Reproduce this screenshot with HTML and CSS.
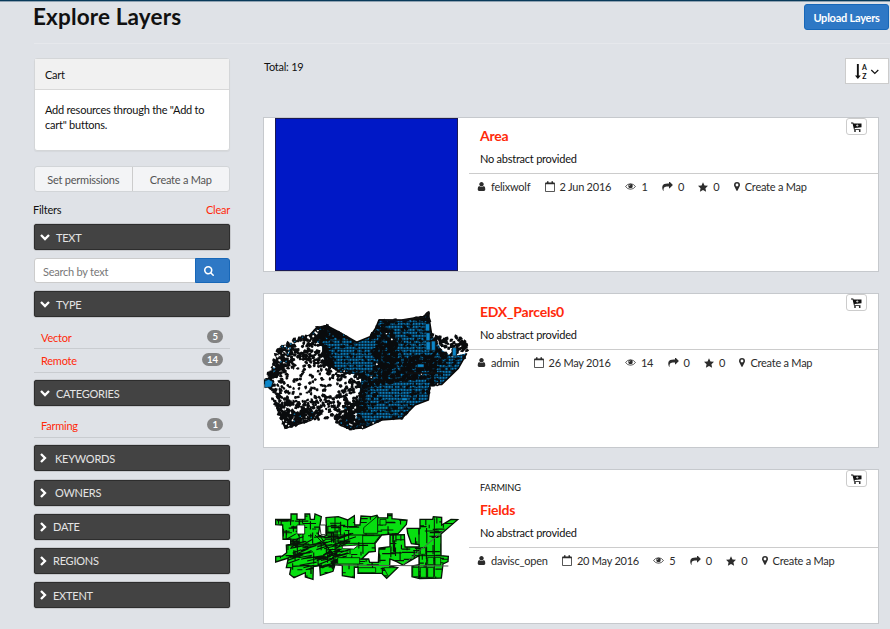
FILE: index.html
```html
<!DOCTYPE html>
<html lang="en">
<head>
<meta charset="utf-8">
<title>Explore Layers</title>
<link rel="stylesheet" href="styles.css">
</head>
<body>
<svg class="defs" width="0" height="0" aria-hidden="true">
  <symbol id="user" viewBox="256 128 1280 1536"><path d="M1536 1399q0 109-62.5 187t-150.5 78h-854q-88 0-150.5-78t-62.5-187q0-85 8.5-160.5t31.5-152 58.5-131 94-89 134.5-34.5q131 128 313 128t313-128q76 0 134.5 34.5t94 89 58.5 131 31.5 152 8.5 160.5zm-256-887q0 159-112.5 271.5t-271.5 112.5-271.5-112.5-112.5-271.5 112.5-271.5 271.5-112.5 271.5 112.5 112.5 271.5z"/></symbol>
  <symbol id="cal" viewBox="0 0 10 11"><path d="M.5 2h9v8.500h-9z" fill="none" stroke="currentColor" stroke-width=".8"/><path d="M.5 1.800h9v1.400h-9zM2 .2h1.500v2.500H2zM6.500 .2H8v2.500H6.500z"/></symbol>
  <symbol id="eye" viewBox="0 0 22 14"><path d="M1 7Q5 1.500 11 1.500T21 7Q17 12.500 11 12.500T1 7z" fill="none" stroke="currentColor" stroke-width="1.500"/><circle cx="11" cy="6.200" r="4.500"/><path d="M8.500 6Q8.700 3.600 11 3.500" fill="none" stroke="#fff" stroke-width="1"/></symbol>
  <symbol id="share" viewBox="0 128 1792 1536"><path d="M1792 640q0 26-19 45l-512 512q-19 19-45 19t-45-19-19-45v-256h-224q-98 0-175.500 6t-154 21.500-133 42.500-105.500 69.500-80 101-48.500 138.500-17.500 181q0 55 5 123 0 6 2.500 23.500t2.500 26.500q0 15-8.500 25t-23.500 10q-16 0-28-17-7-9-13-22t-13.500-30-10.500-24q-127-285-127-451 0-199 53-333 162-403 875-403h224v-256q0-26 19-45t45-19 45 19l512 512q19 19 19 45z"/></symbol>
  <symbol id="star" viewBox="0 0 20 19"><path d="M10 0l3 6.300 7 .9-5.100 4.800 1.300 6.900L10 15.600l-6.200 3.300L5.100 12 0 7.200l7-.9z"/></symbol>
  <symbol id="pin" viewBox="0 0 12 18"><path fill-rule="evenodd" d="M6 0a6 6 0 0 1 6 6c0 1.200-.3 2-.6 2.700L7.200 17.200a1.300 1.300 0 0 1-2.400 0L.6 8.700C.3 8 0 7.200 0 6a6 6 0 0 1 6-6zm0 3.200a2.800 2.800 0 1 0 0 5.600 2.800 2.800 0 0 0 0-5.600z"/></symbol>
  <symbol id="cart" viewBox="0 0 22 20"><path d="M0 1h4.500l.6 2H21v7.500L7.200 12l.4 1.800H19v1.900H6L3.200 3H0z"/><circle cx="8" cy="18" r="1.800"/><circle cx="17.500" cy="18" r="1.800"/><path d="M10 7h5M12.500 4.500v5" stroke="#fff" stroke-width="1.200"/></symbol>
  <symbol id="down" viewBox="0 0 10 8"><path d="M1 2l4 4 4-4" fill="none" stroke="currentColor" stroke-width="2.300"/></symbol>
  <symbol id="right" viewBox="0 0 8 10"><path d="M2 1l4 4-4 4" fill="none" stroke="currentColor" stroke-width="2.300"/></symbol>
  <symbol id="search" viewBox="64 128 1664 1664"><path d="M1216 832q0-185-131.500-316.500t-316.500-131.500-316.500 131.500-131.500 316.500 131.500 316.500 316.500 131.500 316.500-131.500 131.500-316.500zm512 832q0 52-38 90t-90 38q-54 0-90-38l-343-342q-179 124-399 124-143 0-273.500-55.500t-225-150-150-225-55.500-273.500 55.500-273.500 150-225 225-150 273.500-55.500 273.500 55.500 225 150 150 225 55.500 273.500q0 220-124 399l343 343q37 37 37 90z"/></symbol>
</svg>
<header class="page-head">
  <h1>Explore Layers</h1>
  <a class="upload">Upload Layers</a>
</header>
<div class="columns">
  <aside class="sidebar">
    <section class="panel">
      <div class="panel-head">Cart</div>
      <div class="panel-body">Add resources through the "Add to cart" buttons.</div>
    </section>
    <div class="btn-group"><a>Set permissions</a><a>Create a Map</a></div>
    <div class="filters"><span>Filters</span><a>Clear</a></div>
    <div class="bar"><svg class="chev"><use href="#down"/></svg>TEXT</div>
    <div class="searchbox"><span>Search by text</span><b><svg><use href="#search"/></svg></b></div>
    <div class="bar"><svg class="chev"><use href="#down"/></svg>TYPE</div>
    <ul class="facets"><li>Vector<i>5</i></li><li>Remote<i>14</i></li></ul>
    <div class="bar"><svg class="chev"><use href="#down"/></svg>CATEGORIES</div>
    <ul class="facets"><li>Farming<i>1</i></li></ul>
    <div class="bar closed wide"><svg class="chev"><use href="#right"/></svg>KEYWORDS</div>
    <div class="bar closed wide"><svg class="chev"><use href="#right"/></svg>OWNERS</div>
    <div class="bar closed"><svg class="chev"><use href="#right"/></svg>DATE</div>
    <div class="bar closed"><svg class="chev"><use href="#right"/></svg>REGIONS</div>
    <div class="bar closed"><svg class="chev"><use href="#right"/></svg>EXTENT</div>
  </aside>
  <main class="results">
    <div class="toolbar">
      <span>Total: 19</span>
      <a class="sort"><svg viewBox="0 0 26 18"><path d="M1.900 1h1.900v11.500h2L2.850 16 0 12.500h1.900z"/><text x="7" y="7.300">A</text><text x="7.200" y="15.800">Z</text><path d="M16.300 7l3.500 3.500L23.300 7" fill="none" stroke="currentColor" stroke-width="1.200"/></svg></a>
    </div>
    <article class="card">
      <div class="thumb"><div class="area-fill"></div></div>
      <div class="info">
        <h2>Area</h2><p>No abstract provided</p>
        <div class="meta">
          <span><svg class="i-user"><use href="#user"/></svg>felixwolf</span><span><svg class="i-cal"><use href="#cal"/></svg>2 Jun 2016</span><span><svg class="i-eye"><use href="#eye"/></svg>1</span><span><svg class="i-share"><use href="#share"/></svg>0</span><span><svg class="i-star"><use href="#star"/></svg>0</span><span><svg class="i-pin"><use href="#pin"/></svg>Create a Map</span>
        </div>
      </div>
      <a class="add"><svg><use href="#cart"/></svg></a>
    </article>
    <article class="card">
      <div class="thumb"><svg id="parcels" class="map" viewBox="27 27 615 459"></svg></div>
      <div class="info">
        <h2>EDX_Parcels0</h2><p>No abstract provided</p>
        <div class="meta">
          <span><svg class="i-user"><use href="#user"/></svg>admin</span><span><svg class="i-cal"><use href="#cal"/></svg>26 May 2016</span><span><svg class="i-eye"><use href="#eye"/></svg>14</span><span><svg class="i-share"><use href="#share"/></svg>0</span><span><svg class="i-star"><use href="#star"/></svg>0</span><span><svg class="i-pin"><use href="#pin"/></svg>Create a Map</span>
        </div>
      </div>
      <a class="add"><svg><use href="#cart"/></svg></a>
    </article>
    <article class="card">
      <div class="thumb"><svg id="fields" class="map" viewBox="27 15 615 459"></svg></div>
      <div class="info categorized">
        <div class="category">FARMING</div>
        <h2>Fields</h2><p>No abstract provided</p>
        <div class="meta">
          <span><svg class="i-user"><use href="#user"/></svg>davisc_open</span><span><svg class="i-cal"><use href="#cal"/></svg>20 May 2016</span><span><svg class="i-eye"><use href="#eye"/></svg>5</span><span><svg class="i-share"><use href="#share"/></svg>0</span><span><svg class="i-star"><use href="#star"/></svg>0</span><span><svg class="i-pin"><use href="#pin"/></svg>Create a Map</span>
        </div>
      </div>
      <a class="add"><svg><use href="#cart"/></svg></a>
    </article>
  </main>
</div>
<script src="maps.js"></script>
</body>
</html>
```
FILE: styles.css
```css
* { box-sizing: border-box; }
body { margin: 0; height: 629px; overflow: hidden; background: #dfe2e7; border-top: 1px solid #083a5a; box-shadow: inset 0 1px #8fa2b2; color: #111; font: 11px/15px Lato, "Liberation Sans", sans-serif; letter-spacing: -.24px; }
svg { fill: currentColor; display: block; flex: none; }
.defs { position: absolute; }
h1, h2, p, ul { margin: 0; padding: 0; font-weight: bold; }
.page-head { height: 43px; margin-left: 34px; display: flex; justify-content: space-between; align-items: flex-start; padding: 2px 1px 0 0; border-bottom: 1px solid #e6e8ec; }
h1 { font-size: 22.500px; line-height: 27px; letter-spacing: .15px; margin-left: -1px; }
.upload { width: 85px; height: 26px; margin-top: 1px; line-height: 25px; text-align: center; color: #fff; font-weight: bold; background: #2e78c5; border: 1px solid #1767b8; border-radius: 3px; white-space: nowrap; }
.columns { display: flex; padding: 15px 0 0 34px; }
.sidebar { width: 196px; flex: none; margin-top: -1px; }
.panel { height: 93px; border: 1px solid #d4d6d8; border-radius: 3px; background: #fff; box-shadow: 0 1px 1px #0000000c; }
.panel-head { height: 31px; padding-left: 10px; line-height: 31px; background: #f1f1f1; border-bottom: 1px solid #d8d8d8; }
.panel-body { padding: 12px 15px 0 10px; }
.btn-group { display: flex; height: 26px; margin-top: 15px; border: 1px solid #d2d5d8; border-radius: 3px; background: #f3f4f6; color: #555; line-height: 25px; text-align: center; }
.btn-group a { flex: 1; }
.btn-group a + a { border-left: 1px solid #ccc; }
.filters { display: flex; justify-content: space-between; height: 32px; padding-top: 10px; }
.filters span { margin-left: -1px; }
.filters a, .facets li, h2 { color: #ff2a0a; }
.bar { height: 26px; margin-bottom: 8.200px; display: flex; align-items: center; padding-left: 5px; background: #434343; border: 1px solid #2d2d2d; border-radius: 2px; box-shadow: 0 0 0 .5px #8888; color: #e4e4e4; }
.bar .chev { width: 10px; height: 8px; margin-right: 6px; color: #fff; }
.bar.closed { padding-left: 4px; margin-bottom: 8.200px; }
.closed .chev { width: 8px; height: 10px; margin-right: 6px; }
.bar.wide .chev { margin-right: 8px; }
.searchbox { display: flex; height: 25px; margin-bottom: 8.300px; background: #fff; border: 1px solid #ccc; border-radius: 3px; line-height: 25px; color: #777; }
.searchbox span { flex: 1; padding-left: 8px; }
.searchbox b { width: 35px; margin: -1px; background: #2e78c5; border: 1px solid #1767b8; border-radius: 0 3px 3px 0; display: flex; align-items: center; padding-left: 8px; color: #fff; }
.searchbox svg { width: 10px; height: 10px; }
.facets { list-style: none; font-weight: normal; padding-top: 1px; margin: -1.500px 0 7.500px; }
.facets li { display: flex; justify-content: space-between; height: 23.500px; padding: 4px 7px 0; border-bottom: 1px solid #c9ccd0; }
.facets li:first-child { height: 24px; padding-top: 4.500px; }
.facets i { font: bold 9.500px/13px Lato, sans-serif; letter-spacing: 0; color: #fff; background: #838383; border-radius: 7px; height: 13px; padding: 0 5px; }
.results { width: 626px; margin-left: 33px; }
.toolbar { display: flex; justify-content: space-between; height: 58px; padding-left: 1px; line-height: 15px; }
.sort { width: 44px; height: 26px; margin-top: -1px; background: #fff; border: 1px solid #ccc; padding: 4px 0 0 9px; }
.sort svg { width: 26px; height: 18px; }
.sort text { font: bold 7px Lato, sans-serif; letter-spacing: 0; }
.card { position: relative; display: flex; width: 616px; height: 155px; margin-bottom: 21px; background: #fff; border: 1px solid #c6c9cd; }
.thumb { width: 205px; height: 153px; flex: none; }
.area-fill { width: 183px; height: 153px; margin-left: 11px; background: #0018c6; border: 1px solid #1a1a55; }
.map { width: 205px; height: 153px; }
.info { flex: 1; padding-top: 9px; }
.info h2 { padding-left: 11px; font-size: 14px; line-height: 18px; letter-spacing: -.22px; }
.info p { padding-left: 11px; height: 22px; margin-top: 6px; font-weight: normal; }
.categorized { padding-top: 10px; }
.category { padding-left: 11px; font-size: 9.200px; line-height: 16px; height: 21px; letter-spacing: -.08px; }
.meta { display: flex; border-top: 1px solid #ccc; padding: 5px 0 0 8px; gap: 14.300px; }
.meta span { display: flex; align-items: center; gap: 5px; white-space: nowrap; color: #2c2c2c; }
.i-user { width: 9px; height: 9px; }
.i-cal { width: 10px; height: 11px; }
.i-eye { width: 11px; height: 7px; }
.i-share { width: 11px; height: 9px; }
.i-star { width: 10px; height: 10px; }
.i-pin { width: 6px; height: 9px; }
.add { position: absolute; right: 11px; top: 0; width: 21px; height: 17px; border: 1px solid #ccc; border-radius: 3px; display: flex; align-items: center; justify-content: center; background: #fff; }
.add svg { width: 11px; height: 10px; }
```
FILE: maps.js
```js
let seed = 7;
const rnd = () => (seed = (seed * 16807) % 2147483647) / 2147483647;
const inside = (x, y, p) => {
  let c = false;
  for (let i = 0, j = p.length - 1; i < p.length; j = i++) {
    const [a, b] = p[i], [d, e] = p[j];
    if ((b > y) !== (e > y) && x < (d - a) * (y - b) / (e - b) + a) c = !c;
  }
  return c;
};
const parse = s => s.split(" ").map(q => q.split(",").map(Number));

// Parcel boundaries: blue blocks, dark small lots and scattered points
const outline = "27,290 50,240 70,190 90,180 130,152 165,155 185,128 215,122 250,140 305,172 345,155 362,130 372,105 440,105 505,95 520,82 524,112 530,150 575,160 620,152 640,180 635,205 610,250 560,298 525,300 520,345 480,360 440,400 380,405 330,428 285,432 255,420 235,400 170,405 90,430 70,380 50,335 47,310";
const base = "160,155 185,128 215,122 250,140 305,172 345,155 362,130 372,105 440,105 505,95 520,82 524,112 530,150 560,195 590,215 635,205 610,250 560,298 525,300 520,345 480,360 440,400 380,405 330,428 300,432 320,270 270,265 240,250 210,240 200,180";
const out = parse(outline);
const open = parse("115,172 195,165 205,240 260,262 325,266 300,300 345,345 275,360 250,420 190,410 165,365 110,385 50,345 45,290 100,240");
const core = parse("110,245 150,220 200,260 290,290 240,335 190,330 150,350 110,350 80,310");
const open2 = parse("570,170 600,155 600,200 570,240 560,200");
const blues = ["205,160 350,160 360,260 240,250", "415,110 524,110 540,210 430,215", "335,305 525,275 515,350 440,390 330,420", "560,225 635,195 610,250 555,298 530,290"].map(parse);
let grid = "", blobs = "", white = "", tints = "";
for (let x = 30; x < 645; x += 9) grid += `M${x} 80V435`;
for (let y = 85; y < 435; y += 9) grid += `M27 ${y}H642`;
const blob = (x, y, r) => {
  const a = rnd() * 3;
  let s = "";
  for (let k = 0; k < 5; k++) {
    const t = a + k * 1.257, q = r * (.6 + rnd() * .7);
    s += (k ? "L" : "M") + (x + Math.cos(t) * q).toFixed(1) + " " + (y + Math.sin(t) * q).toFixed(1);
  }
  return s + "Z";
};
for (let y = 85; y < 435; y += 6) for (let x = 27; x < 642; x += 6) {
  const px = x + rnd() * 6, py = y + rnd() * 6;
  if (!inside(px, py, out)) continue;
  if (inside(px, py, core)) { if (rnd() < .17) blobs += blob(px, py, 5.5); }
  else if (inside(px, py, open) || inside(px, py, open2)) { if (rnd() < .42) blobs += blob(px, py, 6); }
  else if (blues.some(b => inside(px, py, b))) { if (rnd() < .17) blobs += blob(px, py, 5); }
  else {
    if (rnd() < (px < 300 ? .85 : .56)) blobs += blob(px, py, 6.5);
    if (px < 200 && rnd() < .05) white += blob(px, py, 4);
    else if (px < 300 && rnd() < .05) tints += blob(px, py, 3);
    else if (rnd() < .008) white += blob(px, py, 3);
  }
}
document.getElementById("parcels").innerHTML = `
<clipPath id="pc"><polygon points="${base}"/></clipPath>
<polygon points="${base}" fill="#0a7dbb"/>
<g clip-path="url(#pc)"><path d="${grid}" stroke="#061521" stroke-width="2.800"/></g>
<polyline points="160,155 185,128 215,122 250,140 305,172 345,155 362,130 372,105 440,105 505,95 520,82 524,112 530,150" fill="none" stroke="#080808" stroke-width="5"/>
<polyline points="635,205 610,250 560,298 525,300 520,345 480,360 440,400 380,405 330,428 285,432 255,420" fill="none" stroke="#080808" stroke-width="5"/>
<polyline points="170,405 90,430 68,365" fill="none" stroke="#080808" stroke-width="4"/>
<path d="${blobs}" fill="#090b0d"/><path d="${white}" fill="#fff"/><path d="${tints}" fill="#0a6da3"/>
<path d="M29 288l12-5 13 7-5 16-20 2zM511 116h13v22h-13zM513 143h12v24h-12zM513 170h13v25h-13zM529 168h12v28h-12zM487 237h20v10h-20zM440 338h17v9h-17zM592 188h12v25h-12z" fill="#0b86c9" stroke="#111" stroke-width="2"/>
<path d="M455 264h110M508 94l16-14M372 104l68 2 65-9" stroke="#111" stroke-width="4" fill="none"/>`;

// Farm fields: block shapes subdivided by irregular boundaries
const shape = "62,163 108,163 108,147 126,147 126,163 150,163 150,147 164,147 166,163 178,163 180,147 199,155 190,210 205,215 215,211 213,158 250,155 278,165 298,152 299,180 315,180 318,153 350,155 366,151 370,158 398,159 398,147 411,147 411,161 456,165 454,178 430,205 380,210 360,236 361,259 342,261 320,282 341,282 344,292 370,292 372,249 405,245 405,210 448,209 450,246 492,246 492,239 469,236 458,205 456,190 495,190 495,163 533,163 535,155 560,157 560,180 588,163 608,164 558,207 558,272 580,274 579,290 564,297 559,339 494,341 471,335 471,303 492,299 492,272 444,300 425,290 405,282 404,303 428,308 395,340 380,325 309,325 309,307 298,306 298,338 262,332 262,302 240,299 234,319 196,331 194,302 175,305 174,343 151,336 151,323 117,338 104,328 108,308 94,308 100,279 62,291 62,275 82,273 95,263 94,240 107,238 107,222 84,223 83,180 62,179";
const holes = "M262 243L311 240L296 252L262 251zM126 180H149V207H126zM194 180H212V209H198z";
let lines = "";
for (let i = 0; i < 270; i++) {
  const x = 60 + rnd() * 515, y = 147 + rnd() * 190, l = 12 + rnd() * 32;
  lines += rnd() < .5 ? `M${x} ${y}h${l}` : `M${x} ${y}v${l * .8}`;
}
for (let i = 0; i < 80; i++) {
  const x = 95 + rnd() * 165, y = 215 + rnd() * 100;
  lines += `M${x} ${y}l${25 + rnd() * 30} ${-20 + rnd() * 18}`;
}
document.getElementById("fields").innerHTML = `
<clipPath id="fc"><polygon points="${shape}"/></clipPath>
<polygon points="${shape}" fill="#07df10" stroke="#071507" stroke-width="4"/>
<g clip-path="url(#fc)"><path d="${lines}" stroke="#071507" stroke-width="3.400" fill="none"/>
<path d="M240 155v145M492 185v155M515 245v95M538 160v175M470 272h110M215 210h190M100 240h150M240 235h120M180 210l60 60M190 205l40 60M340 185l26-32" stroke="#071507" stroke-width="3" fill="none"/>
<path d="M326 188l42-35v52h-42zM310 308h52v15h-52zM323 212h52l-18 23h-34zM386 308h40l-26 26zM496 248h16v20h-16zM540 277h17v23h-17zM496 307h18v30h-18zM518 307h18v30h-18zM518 277h18v22h-18zM473 307h18v28h-18zM248 278h66v19h-66zM375 163h18v17h-18z" fill="#07df10" stroke="#071507" stroke-width="2.500"/>
</g><path d="${holes}" fill="#fff" stroke="#071507" stroke-width="2.500"/>
<path d="M444 300L565 197M240 300L580 303" stroke="#555" stroke-width="3"/>`;
```
